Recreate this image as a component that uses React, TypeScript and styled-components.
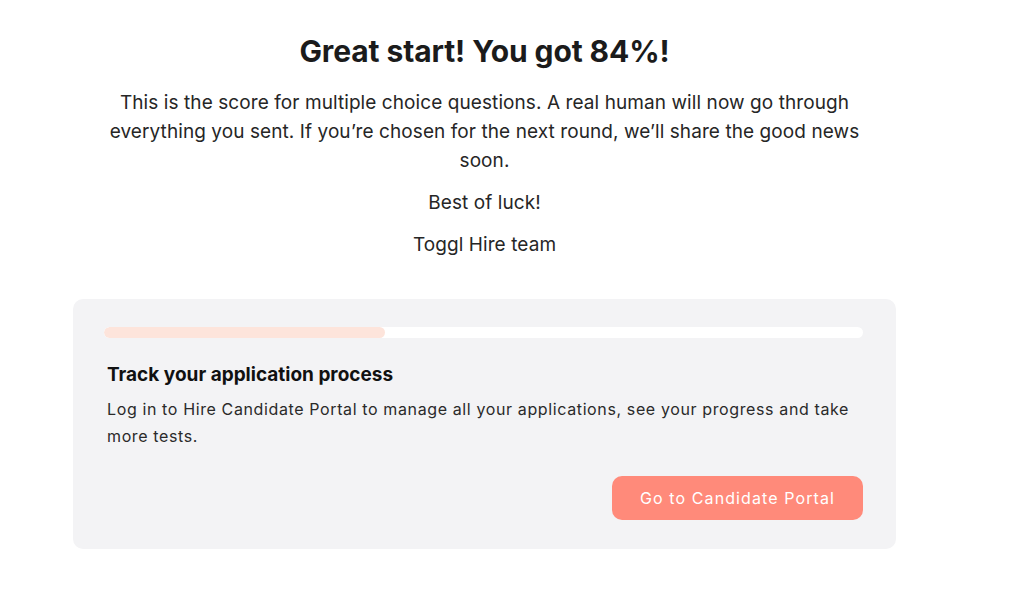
import styled, { createGlobalStyle } from 'styled-components'

const GlobalStyle = createGlobalStyle`
	html, body {
		margin: 0;
		padding: 0;
		background: #ffffff;
		font-family: Inter, "Noto Sans", sans-serif;
		color: #1f1f1f;
	}
	* {
		box-sizing: border-box;
	}
`

const Page = styled.main`
	width: 823px;
	margin-left: 73px;
	padding-top: 30px;
	display: flex;
	flex-direction: column;
	align-items: center;
`

const Heading = styled.h1`
	margin: 0;
	font-size: 30px;
	line-height: 42px;
	font-weight: 700;
	color: #1b1b1b;
	letter-spacing: -0.1px;
`

const Message = styled.div`
	width: 770px;
	margin-top: 16px;
	text-align: center;
	font-size: 19px;
	line-height: 29px;
	letter-spacing: 0.08px;
	color: #262626;

	p {
		margin: 0 0 13px;
	}
`

const Card = styled.section`
	align-self: stretch;
	margin-top: 27px;
	padding: 28px 33px 29px 31px;
	background: #f3f3f5;
	border-radius: 10px;
	display: flex;
	flex-direction: column;
`

const Track = styled.div`
	height: 11px;
	border-radius: 6px;
	background: #ffffff;
	overflow: hidden;
`

const Fill = styled.div`
	height: 100%;
	border-radius: 6px;
	background: #fde4db;
`

const CardTitle = styled.h2`
	margin: 24px 0 0 3px;
	font-size: 19px;
	line-height: 26px;
	font-weight: 700;
	color: #111111;
`

const CardText = styled.p`
	margin: 8px 0 0 3px;
	font-size: 16px;
	line-height: 27px;
	letter-spacing: 0.62px;
	color: #2a2a2a;
`

const Actions = styled.div`
	display: flex;
	justify-content: flex-end;
	margin-top: 26px;
`

const PortalButton = styled.button`
	width: 251px;
	height: 44px;
	border: none;
	border-radius: 10px;
	background: #ff8a7a;
	color: #ffffff;
	font-family: Inter, "Noto Sans", sans-serif;
	font-size: 16px;
	letter-spacing: 1.1px;
	cursor: pointer;
`

const App = () => {
	const progress = 37
	return (
		<>
			<GlobalStyle />
			<Page>
				<Heading>Great start! You got 84%!</Heading>
				<Message>
					<p>
						This is the score for multiple choice questions. A real human will now go through
						everything you sent. If you’re chosen for the next round, we’ll share the good news
						soon.
					</p>
					<p>Best of luck!</p>
					<p>Toggl Hire team</p>
				</Message>
				<Card>
					<Track>
						<Fill style={{ width: `${progress}%` }} />
					</Track>
					<CardTitle>Track your application process</CardTitle>
					<CardText>
						Log in to Hire Candidate Portal to manage all your applications, see your progress and take
						more tests.
					</CardText>
					<Actions>
						<PortalButton>Go to Candidate Portal</PortalButton>
					</Actions>
				</Card>
			</Page>
		</>
	)
}

export default App
